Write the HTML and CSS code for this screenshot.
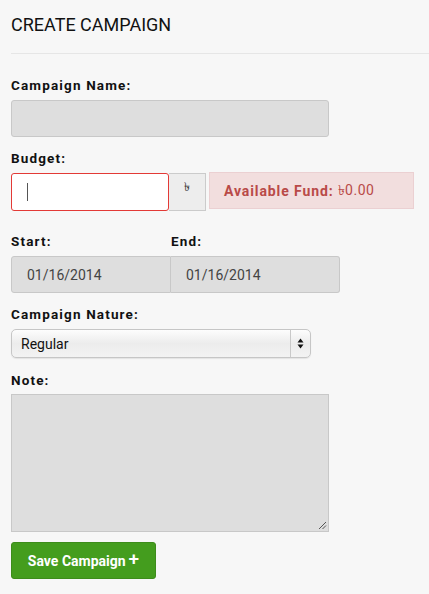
FILE: index.html
```html
<!DOCTYPE html>
<html>
<head>
<meta charset="utf-8">
<link rel="stylesheet" href="styles.css">
</head>
<body>
<div class="page">
  <h1 class="title">CREATE CAMPAIGN</h1>
  <form class="form">
    <label class="label">Campaign Name:</label>
    <div class="input name-input"></div>

    <label class="label budget-label">Budget:</label>
    <div class="budget-row">
      <div class="input-group">
        <div class="budget-input"><span class="caret"></span></div>
        <div class="addon">৳</div>
      </div>
      <div class="fund"><b>Available Fund:</b> ৳0.00</div>
    </div>

    <div class="dates-labels">
      <label class="label date-label">Start:</label>
      <label class="label">End:</label>
    </div>
    <div class="dates">
      <div class="date date-start">01/16/2014</div>
      <div class="date date-end">01/16/2014</div>
    </div>

    <label class="label nature-label">Campaign Nature:</label>
    <div class="select">
      <span class="select-text">Regular</span>
      <span class="select-arrows">
        <svg width="7" height="11" viewBox="0 0 7 11"><path d="M3.5 0.5 L6.5 4.5 L0.5 4.5 Z M3.5 10.5 L6.5 6.5 L0.5 6.5 Z" fill="#111"/></svg>
      </span>
    </div>

    <label class="label note-label">Note:</label>
    <div class="textarea">
      <svg class="grip" width="9" height="9" viewBox="0 0 9 9"><path d="M1 8 L8 1 M4.5 8 L8 4.5" stroke="#555" stroke-width="1"/></svg>
    </div>

    <button type="button" class="btn">Save Campaign <span class="plus">+</span></button>
  </form>
</div>
</body>
</html>
```
FILE: styles.css
```css
html, body {
  margin: 0;
  padding: 0;
  background: #f7f7f7;
}
body {
  font-family: Roboto, "Liberation Sans", sans-serif;
  color: #222;
}
.page {
  padding: 0 0 0 11px;
}
.title {
  margin: 0;
  padding: 15px 0 0 0;
  box-sizing: border-box;
  height: 54px;
  font-size: 18px;
  line-height: 20px;
  font-weight: 400;
  color: #111;
  border-bottom: 1px solid #e6e6e6;
}
.form {
  display: flex;
  flex-direction: column;
  align-items: flex-start;
  padding-top: 23px;
}
.label {
  display: block;
  font-size: 13.5px;
  font-weight: 700;
  letter-spacing: 1.15px;
  color: #111;
  line-height: 16px;
}
.input {
  box-sizing: border-box;
  background: #dedede;
  border: 1px solid #c8c8c8;
  border-radius: 3px;
}
.name-input {
  width: 318px;
  height: 37px;
  margin-top: 7px;
}
.budget-label {
  margin-top: 13px;
}
.budget-row {
  display: flex;
  align-items: flex-start;
  margin-top: 6px;
  gap: 3px;
}
.input-group {
  display: flex;
  margin-top: 1px;
}
.budget-input {
  box-sizing: border-box;
  width: 158px;
  height: 38px;
  background: #fff;
  border: 1px solid #e33a36;
  border-radius: 3px;
  display: flex;
  align-items: center;
  padding-left: 15px;
}
.caret {
  width: 1px;
  height: 18px;
  background: #555;
}
.addon {
  box-sizing: border-box;
  width: 37px;
  height: 38px;
  background: #ededed;
  border: 1px solid #cbcbcb;
  border-left: none;
  display: flex;
  align-items: center;
  justify-content: center;
  font-size: 12px;
  color: #333;
  padding-bottom: 8px;
}
.fund {
  box-sizing: border-box;
  width: 205px;
  height: 37px;
  background: #f2dede;
  border: 1px solid #ebd0d2;
  color: #b94a48;
  font-size: 14px;
  display: flex;
  align-items: center;
  padding-left: 14px;
  letter-spacing: 0.5px;
  white-space: pre;
}
.fund b {
  font-weight: 700;
  letter-spacing: 0.9px;
}
.dates-labels {
  display: flex;
  margin-top: 22px;
}
.date-label {
  width: 160px;
}
.dates {
  display: flex;
  margin-top: 7px;
}
.date {
  box-sizing: border-box;
  height: 37px;
  background: #dedede;
  border: 1px solid #c8c8c8;
  font-size: 14px;
  color: #444;
  display: flex;
  align-items: center;
  padding-left: 15px;
}
.date-start {
  width: 160px;
  border-radius: 3px 0 0 3px;
}
.date-end {
  width: 169px;
  border-left: none;
  border-radius: 0 3px 3px 0;
}
.nature-label {
  margin-top: 13px;
}
.select {
  box-sizing: border-box;
  margin-top: 7px;
  width: 300px;
  height: 29px;
  border: 1px solid #c6c6c6;
  border-radius: 5px;
  background: linear-gradient(#fdfdfd, #ececec 50%, #f3f3f3);
  display: flex;
  align-items: center;
  box-shadow: 0 1px 1px rgba(0,0,0,0.08);
}
.select-text {
  flex: 1;
  padding-left: 9px;
  font-size: 14px;
  color: #111;
}
.select-arrows {
  width: 19px;
  height: 100%;
  border-left: 1px solid #c9c9c9;
  display: flex;
  align-items: center;
  justify-content: center;
}
.note-label {
  margin-top: 14px;
}
.textarea {
  box-sizing: border-box;
  position: relative;
  margin-top: 6px;
  width: 318px;
  height: 138px;
  background: #dedede;
  border: 1px solid #c8c8c8;
}
.grip {
  position: absolute;
  right: 1px;
  bottom: 1px;
}
.btn {
  margin-top: 10px;
  width: 145px;
  height: 37px;
  background: #449d1e;
  border: 1px solid #3d8c1b;
  border-radius: 3px;
  color: #fff;
  font-family: Roboto, "Liberation Sans", sans-serif;
  font-size: 14px;
  font-weight: 700;
  letter-spacing: 0;
  padding: 0;
  display: flex;
  align-items: center;
  justify-content: center;
}
.plus {
  font-size: 19px;
  font-weight: 500;
  margin-left: 3px;
  line-height: 1;
  position: relative;
  top: -2px;
}
```
